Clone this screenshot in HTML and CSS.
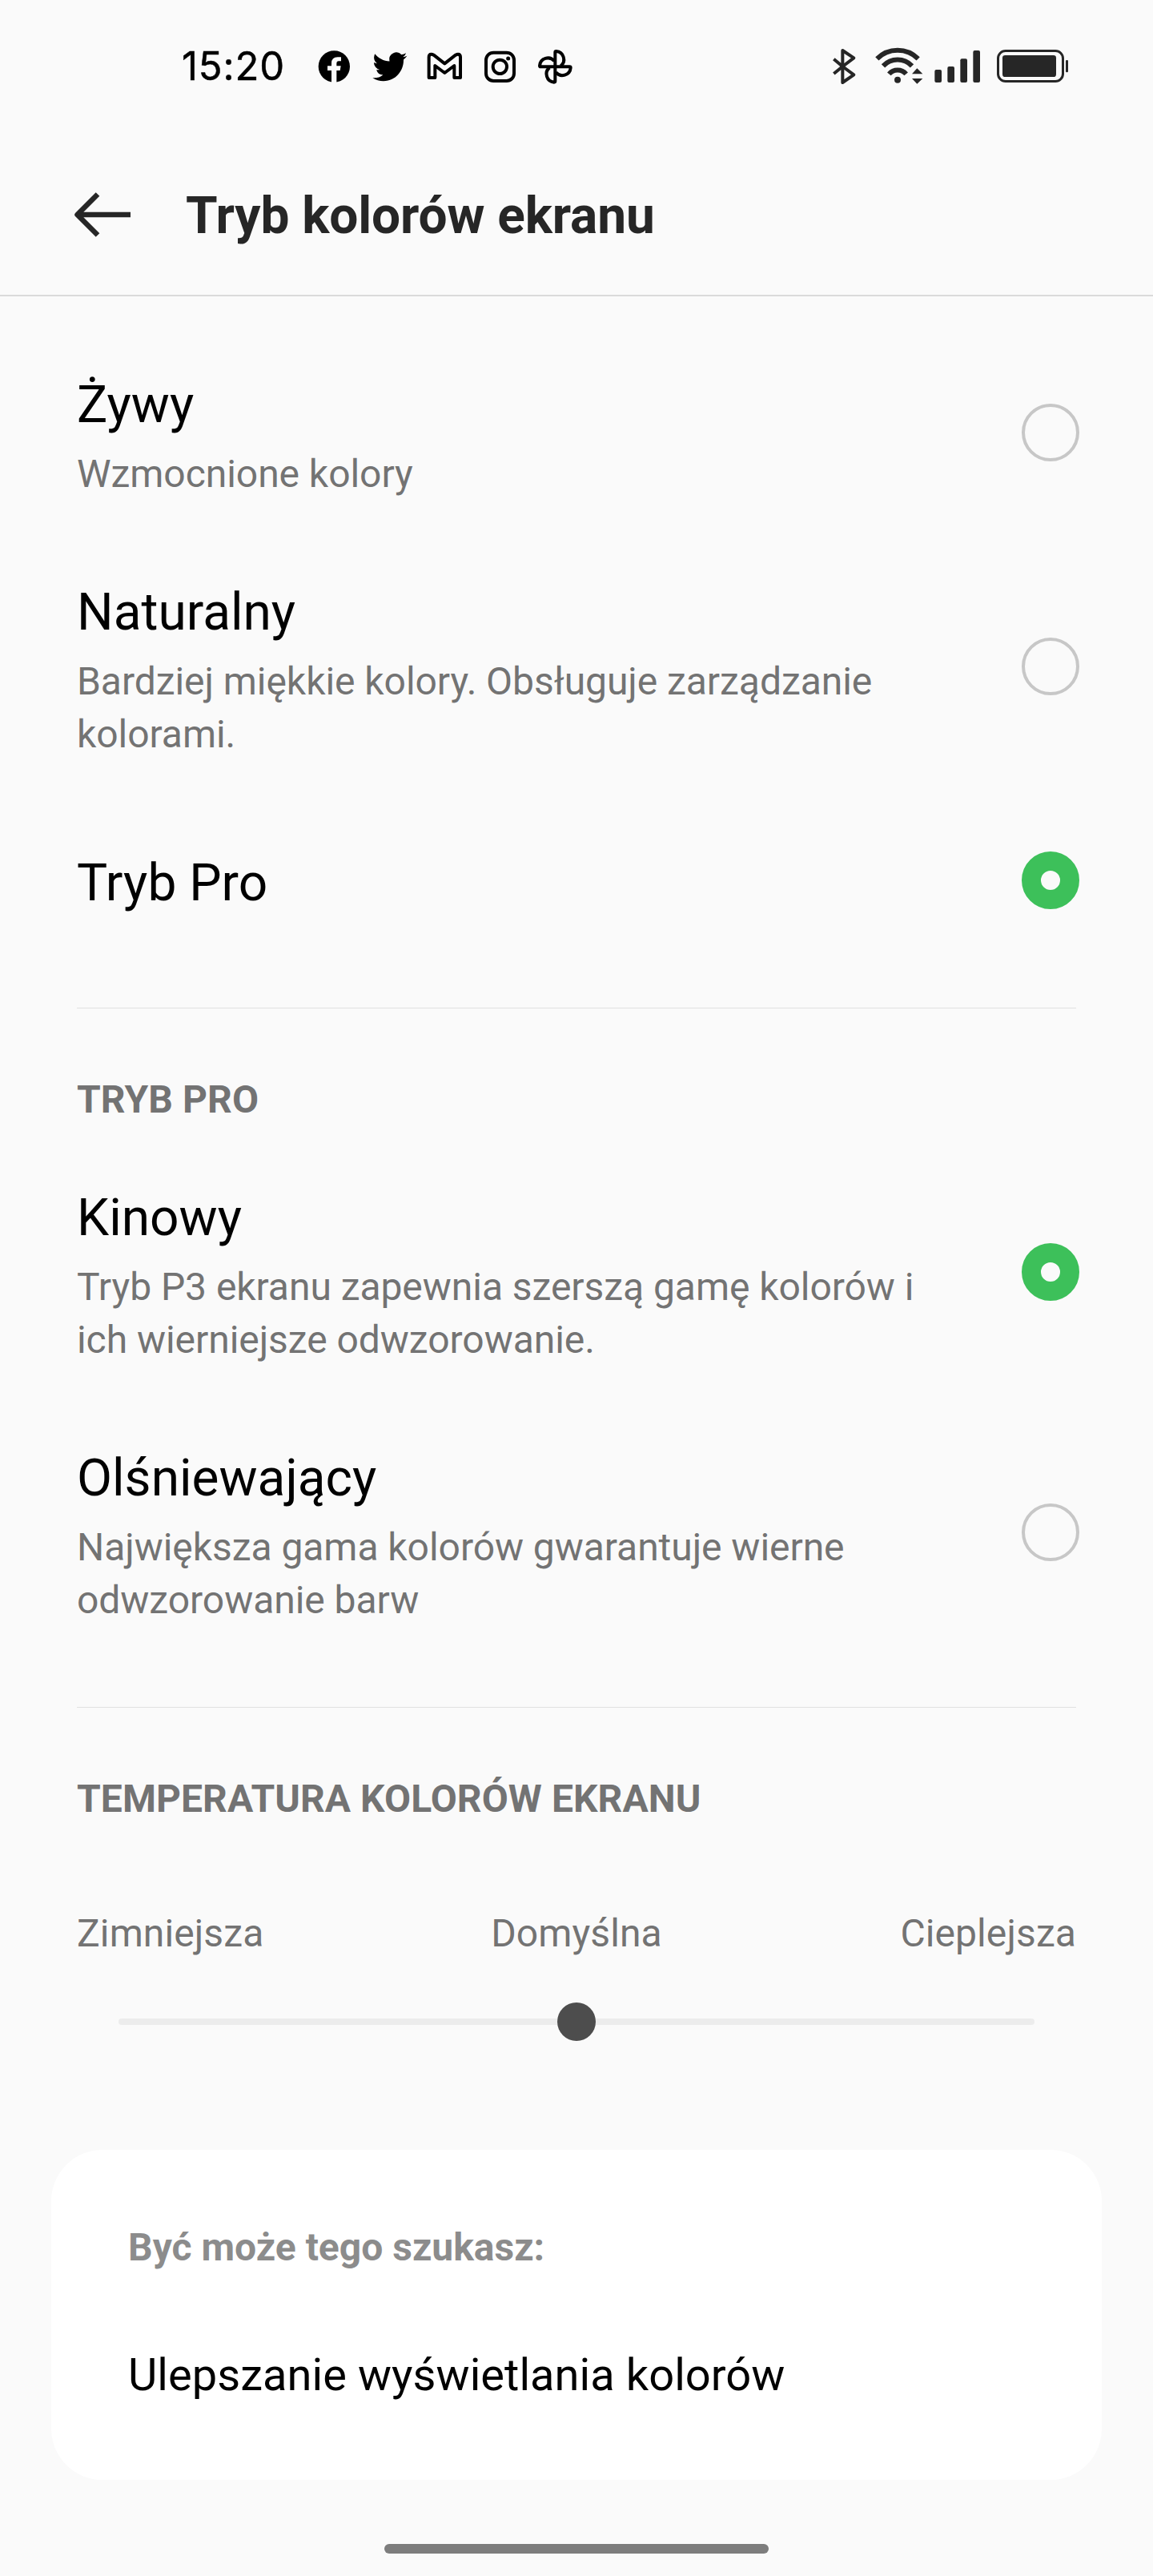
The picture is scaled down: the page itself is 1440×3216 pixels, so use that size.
FILE: index.html
```html
<!DOCTYPE html>
<html lang="pl">
<head>
<meta charset="utf-8">
<title>Tryb kolorów ekranu</title>
<link rel="stylesheet" href="styles.css">
</head>
<body>
<div class="status">
  <span class="clock">15:20</span>
  <div class="apps">
    <svg width="48" height="48" viewBox="582 57 144 144"><circle cx="652" cy="129" r="59"/><path fill="#fafafa" d="M642 192V144H627V127H642V117Q642 94 665 94H678V109H669Q661 109 661 118V127H677L674 144H661V192Z"/></svg>
    <svg width="48" height="48" viewBox="69 57 144 144"><path transform="translate(76 64) scale(5.38 5.5)" d="M23.953 4.57a10 10 0 01-2.825.775 4.958 4.958 0 002.163-2.723c-.951.555-2.005.959-3.127 1.184a4.92 4.92 0 00-8.384 4.482C7.69 8.095 4.067 6.13 1.64 3.162a4.822 4.822 0 00-.666 2.475c0 1.71.87 3.213 2.188 4.096a4.904 4.904 0 01-2.228-.616v.06a4.923 4.923 0 003.946 4.827 4.996 4.996 0 01-2.212.085 4.936 4.936 0 004.604 3.417 9.867 9.867 0 01-6.102 2.105c-.39 0-.779-.023-1.17-.067a13.995 13.995 0 007.557 2.209c9.053 0 13.998-7.496 13.998-13.985 0-.21 0-.42-.015-.63A9.935 9.935 0 0024 4.59z"/></svg>
    <svg width="48" height="48" viewBox="276 57 144 144"><path class="line" d="M287 171V94q0-11 9-11q4 0 9 3L346 118L387 86q5-3 9-3q9 0 9 11V171H382V126L346 153L310 126V171Z"/></svg>
    <svg width="48" height="48" viewBox="483 57 144 144"><g class="line"><rect x="501" y="77" width="105" height="106" rx="28"/><circle cx="553" cy="130" r="26"/></g><circle cx="584" cy="99" r="7.5"/></svg>
    <svg width="48" height="48" viewBox="690 57 144 144"><g class="line"><path id="blade" d="M760 130V76q0-4 4-4a31 31 0 0 1 17 55"/><use href="#blade" transform="rotate(90 760 130)"/><use href="#blade" transform="rotate(180 760 130)"/><use href="#blade" transform="rotate(270 760 130)"/></g></svg>
  </div>
  <div class="system">
    <svg width="44" height="48" viewBox="78 57 132 144"><path class="bt" d="M94 101L127 129L169 160L127 189V69L169 97L127 129L94 156"/></svg>
    <svg width="64" height="48" viewBox="240 57 192 144"><g class="wave"><path d="M256 100A109 109 0 0 1 410 100"/><path d="M279 127A74 74 0 0 1 387 127"/><path d="M301 157A42 42 0 0 1 365 157"/></g><circle cx="333" cy="179" r="12"/><path d="M406 136L427 157H387ZM387 174H427L406 194Z"/></svg>
    <svg width="68" height="48" viewBox="462 57 204 144"><rect x="472" y="141" width="26" height="48" rx="6"/><rect x="520" y="129" width="26" height="60" rx="6"/><rect x="568" y="100" width="26" height="89" rx="6"/><rect x="616" y="69" width="26" height="120" rx="6"/></svg>
    <svg width="96" height="48" viewBox="696 57 288 144"><rect class="shell" x="709.5" y="70.500" width="243" height="114" rx="28"/><rect x="726" y="87" width="201" height="81" rx="10"/><rect x="963" y="105" width="9" height="46" rx="4"/></svg>
  </div>
</div>
<header class="bar">
  <svg class="back" width="76" height="60" viewBox="90 238 76 60"><path d="M122 242.500L96.500 268L122 293.500M97 268H163"/></svg>
  <h1>Tryb kolorów ekranu</h1>
</header>
<main>
  <section class="group">
    <div class="row"><div class="text"><h2>Żywy</h2><p>Wzmocnione kolory</p></div><span class="radio"></span></div>
    <div class="row"><div class="text"><h2>Naturalny</h2><p>Bardziej miękkie kolory. Obsługuje zarządzanie kolorami.</p></div><span class="radio"></span></div>
    <div class="row single"><div class="text"><h2>Tryb Pro</h2></div><span class="radio on"></span></div>
  </section>
  <section class="group ruled">
    <h3>TRYB PRO</h3>
    <div class="row"><div class="text"><h2>Kinowy</h2><p>Tryb P3 ekranu zapewnia szerszą gamę kolorów i ich wierniejsze odwzorowanie.</p></div><span class="radio on"></span></div>
    <div class="row"><div class="text"><h2>Olśniewający</h2><p>Największa gama kolorów gwarantuje wierne odwzorowanie barw</p></div><span class="radio"></span></div>
  </section>
  <section class="group ruled temperature">
    <h3>TEMPERATURA KOLORÓW EKRANU</h3>
    <div class="labels"><span>Zimniejsza</span><span>Domyślna</span><span>Cieplejsza</span></div>
    <div class="slider"><span class="thumb"></span></div>
  </section>
  <aside class="card">
    <h4>Być może tego szukasz:</h4>
    <a class="link">Ulepszanie wyświetlania kolorów</a>
  </aside>
</main>
<div class="home"></div>
</body>
</html>
```
FILE: styles.css
```css
* { box-sizing: border-box; margin: 0; padding: 0; }
body { width: 1440px; height: 3216px; overflow: hidden; background: #fafafa; color: #000; font-family: Roboto, sans-serif; }
svg { display: block; flex: none; }

.status { display: flex; align-items: center; height: 166px; padding: 0 102px 0 227px; }
.clock { width: 167px; font: 400 49px/60px Inter, sans-serif; letter-spacing: 0.9px; -webkit-text-stroke: 0.5px #000; }
.apps { display: flex; gap: 21px; }
.line { fill: none; stroke: #000; stroke-width: 12; stroke-linejoin: round; }
.system { display: flex; gap: 10px; margin-left: auto; fill: #262626; }
.bt { fill: none; stroke: #262626; stroke-width: 12; stroke-linejoin: round; }
.wave { fill: none; stroke: #262626; stroke-width: 18; }
.shell { fill: none; stroke: #262626; stroke-width: 9; }

.bar { display: flex; align-items: center; height: 204px; padding: 2px 90px 0; border-bottom: 2px solid #dadada; }
.back { fill: none; stroke: #262626; stroke-width: 6.5; stroke-linejoin: round; }
h1 { margin: 3px 0 0 66px; font-size: 64px; line-height: 75px; font-weight: 700; letter-spacing: -0.1px; color: #262626; }

.group { padding: 0 96px; }
.group:first-child { padding-top: 40px; }
.row { display: flex; align-items: center; justify-content: space-between; padding-right: -4px; }
.text { width: 1080px; padding: 58px 0 44px; }
.single .text { padding: 71px 0 64px; }
h2 { font-size: 64px; line-height: 75px; font-weight: 400; }
p { margin-top: 16px; font-size: 48px; line-height: 66px; letter-spacing: -0.05px; color: #737373; }
.radio { flex: none; width: 72px; height: 72px; margin-right: -4px; border: 4px solid #c7c7c7; border-radius: 50%; }
.radio.on { border: 24px solid #3dc05a; }

.ruled::before { content: ""; display: block; height: 1px; background: #e0e0e0; }
.ruled { padding-top: 54px; }
.ruled.temperature { padding-top: 56px; }
h3 { font-size: 48px; line-height: 56px; font-weight: 700; letter-spacing: 0.08px; color: #737373; margin: 86px 0 24px; }
.temperature h3 { margin: 86px 0 0; }
.labels { display: grid; grid-template-columns: repeat(3, 1fr); margin-top: 112px; font-size: 48px; line-height: 56px; letter-spacing: 0.1px; color: #737373; }
.labels span:nth-child(2) { text-align: center; }
.labels span:nth-child(3) { text-align: right; }
.slider { display: flex; align-items: center; justify-content: center; height: 8px; margin: 78px 52px 0; border-radius: 4px; background: #ececec; }
.thumb { flex: none; width: 48px; height: 48px; border-radius: 50%; background: #4d4d4d; }

.card { margin: 156px 64px 0; height: 412px; padding: 94px 96px; border-radius: 64px; background: #fff; }
h4 { font-size: 48px; line-height: 56px; font-weight: 700; color: #8c8c8c; }
.link { display: block; margin-top: 98px; font-size: 56px; line-height: 66px; letter-spacing: 0.05px; }
.home { width: 480px; height: 12px; margin: 80px auto 0; border-radius: 6px; background: #7d7d7d; }
```
